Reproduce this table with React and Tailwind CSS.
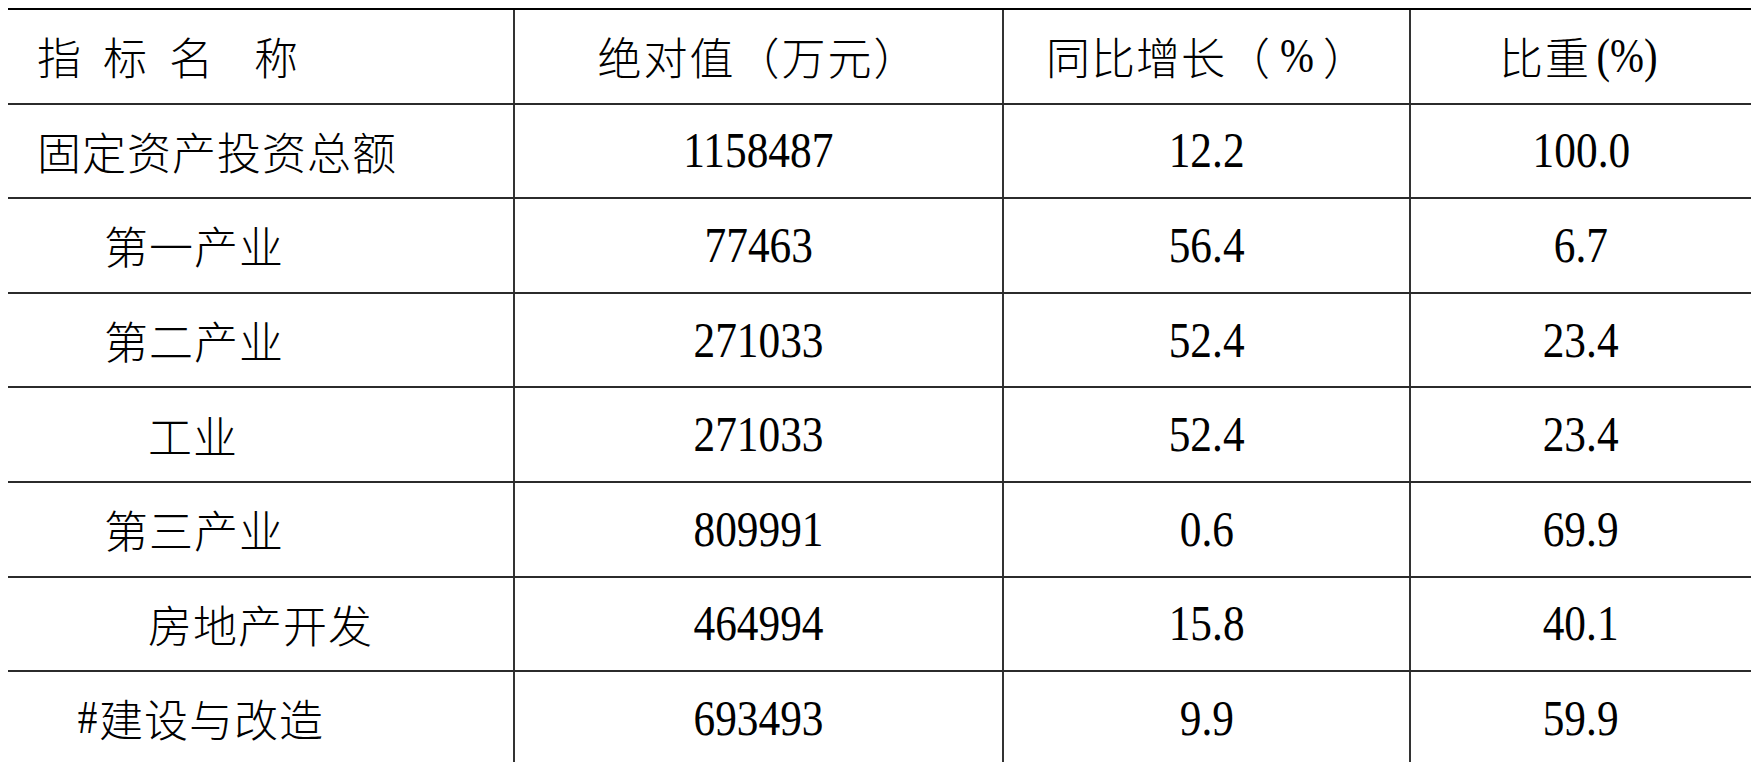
const rows = [
  { name: "固定资产投资总额", indent: "pl-[29px]", abs: "1158487", yoy: "12.2", share: "100.0" },
  { name: "第一产业", indent: "pl-[96px]", abs: "77463", yoy: "56.4", share: "6.7" },
  { name: "第二产业", indent: "pl-[96px]", abs: "271033", yoy: "52.4", share: "23.4" },
  { name: "工业", indent: "pl-[140px]", abs: "271033", yoy: "52.4", share: "23.4" },
  { name: "第三产业", indent: "pl-[96px]", abs: "809991", yoy: "0.6", share: "69.9" },
  { name: "房地产开发", indent: "pl-[140px]", abs: "464994", yoy: "15.8", share: "40.1" },
  { name: "#建设与改造", indent: "pl-[68px]", abs: "693493", yoy: "9.9", share: "59.9" },
];

const Row = ({ first, children }) => (
  <div
    className={
      "grid grid-cols-[505px_489px_407px_1fr] h-[94.6px] border-t-2 " +
      (first ? "border-black" : "border-[#2b2b2b]")
    }
  >
    {children}
  </div>
);

const Cell = ({ children }) => (
  <div className="flex items-center justify-center border-l-2 border-[#333]">{children}</div>
);

// condensed Times-like digits
const Num = ({ children, size = "text-[51px]", className = "" }) => (
  <span className={"inline-block scale-x-[0.85] font-['Liberation_Serif',serif] leading-none " + size + " " + className}>
    {children}
  </span>
);

const Zh = ({ children, className = "" }) => (
  <span className={"font-['Noto_Sans_CJK_SC',sans-serif] font-light text-[44px] leading-none " + className}>
    {children}
  </span>
);

export default function App() {
  return (
    <div className="w-[1751px] h-[762px] overflow-hidden bg-white pt-[8px] text-black">
      <div className="ml-[8px]">
        <Row first>
          <div className="flex items-center pl-[29px] pb-[1px]">
            <Zh>指</Zh>
            <Zh className="ml-[22px]">标</Zh>
            <Zh className="ml-[22px]">名</Zh>
            <Zh className="ml-[41px]">称</Zh>
          </div>
          <Cell>
            <Zh className="tracking-[2px]">绝对值（万元）</Zh>
          </Cell>
          <Cell>
            <Zh className="tracking-[1px]">同比增长（</Zh>
            <Num size="text-[48px]" className="mx-[6px]">%</Num>
            <Zh>）</Zh>
          </Cell>
          <Cell>
            <Zh className="tracking-[2px]">比重</Zh>
            <Num size="text-[48px]">(%)</Num>
          </Cell>
        </Row>
        {rows.map((r) => (
          <Row key={r.name}>
            <div className={"flex items-center " + r.indent}>
              {r.name.startsWith("#") ? (
                <>
                  <Num size="text-[46px]">#</Num>
                  <Zh className="tracking-[1px]">{r.name.slice(1)}</Zh>
                </>
              ) : (
                <Zh className="tracking-[1px]">{r.name}</Zh>
              )}
            </div>
            <Cell>
              <Num>{r.abs}</Num>
            </Cell>
            <Cell>
              <Num>{r.yoy}</Num>
            </Cell>
            <Cell>
              <Num>{r.share}</Num>
            </Cell>
          </Row>
        ))}
      </div>
    </div>
  );
}
